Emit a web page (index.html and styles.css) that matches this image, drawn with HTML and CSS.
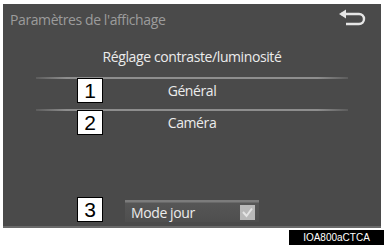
FILE: index.html
```html
<!DOCTYPE html>
<html>
<head>
<meta charset="utf-8">
<link rel="stylesheet" href="styles.css">
</head>
<body>
<div class="page">
  <div class="screen">
    <div class="header">
      <div class="title">Paramètres de l'affichage</div>
      <svg class="back" width="30" height="18" viewBox="0 0 30 18">
        <path d="M4 5 H22 a5 5 0 0 1 0 10 H9" fill="none" stroke="#e6e6e6" stroke-width="2.4"/>
        <path d="M2 5 L9 0.5 L9 9.5 Z" fill="#e6e6e6"/>
      </svg>
    </div>
    <div class="subtitle">Réglage contraste/luminosité</div>
    <div class="rows">
      <div class="row">Général<span class="num num-row">1</span></div>
      <div class="row">Caméra<span class="num num-row">2</span></div>
    </div>
    <div class="footer">
      <span class="num">3</span>
      <div class="mode">
        <span>Mode jour</span>
        <svg class="check" width="15" height="15" viewBox="0 0 15 15">
          <rect x="0" y="0" width="15" height="15" fill="#b9b9b9"/>
          <path d="M3 7 L6.5 11 L12 3.5" fill="none" stroke="#e4e4e4" stroke-width="2"/>
        </svg>
      </div>
    </div>
  </div>
  <div class="code-row"><span class="code">IOA800aCTCA</span></div>
</div>
</body>
</html>
```
FILE: styles.css
```css
html, body { margin: 0; padding: 0; background: #fff; }
.page { width: 384px; height: 245px; font-family: "Open Sans", "Noto Sans", sans-serif; }
.screen {
  margin: 4px 3px 0 3px;
  width: 378px; height: 224px;
  background: #4a4a4a;
  display: flex; flex-direction: column;
  position: relative;
  border-bottom: 2px solid #6a6a6a;
  box-sizing: border-box;
}
.header { display: flex; justify-content: space-between; align-items: center; padding: 2px 14px 0 7px; height: 26px; }
.title { color: #9c9c9c; font-size: 14px; letter-spacing: -0.4px; }
.back { margin-top: -2px; }
.subtitle { color: #ececec; font-size: 14px; text-align: center; margin-top: 15px; letter-spacing: -0.4px; }
.rows { margin: 11px 33px 0 33px; display: flex; flex-direction: column; }
.row {
  position: relative;
  height: 32px; box-sizing: border-box;
  border-top: 2px solid transparent;
  border-image: linear-gradient(90deg, #5a5a5a, #8e8e8e 10%, #8e8e8e 90%, #5a5a5a) 1;
  color: #ececec; font-size: 14px; letter-spacing: -0.4px;
  text-align: center; line-height: 24px;
}
.num {
  display: inline-block; width: 24px; height: 23px; line-height: 24px;
  background: #fff; border: 1px solid #000; color: #000;
  font-family: "Liberation Sans", Arial, sans-serif; font-size: 21px; text-align: center;
  letter-spacing: 0;
}
.num-row { position: absolute; left: 41px; top: -1px; }
.footer { margin-top: auto; margin-bottom: 4px; display: flex; align-items: flex-end; padding-left: 74px; gap: 22px; }
.mode {
  width: 134px; height: 22px; box-sizing: border-box;
  background: linear-gradient(#7c7c7c 0, #7c7c7c 2px, #565656 3px, #4e4e4e);
  display: flex; align-items: center; justify-content: space-between;
  padding: 2px 4px 0 6px;
  color: #ececec; font-size: 14px; letter-spacing: -0.4px;
}
.code-row { display: flex; justify-content: flex-end; margin-top: 2px; }
.code { background: #000; color: #fff; font-family: "Liberation Sans", Arial, sans-serif; font-size: 10px; width: 95px; height: 15px; line-height: 15px; text-align: center; }
```
